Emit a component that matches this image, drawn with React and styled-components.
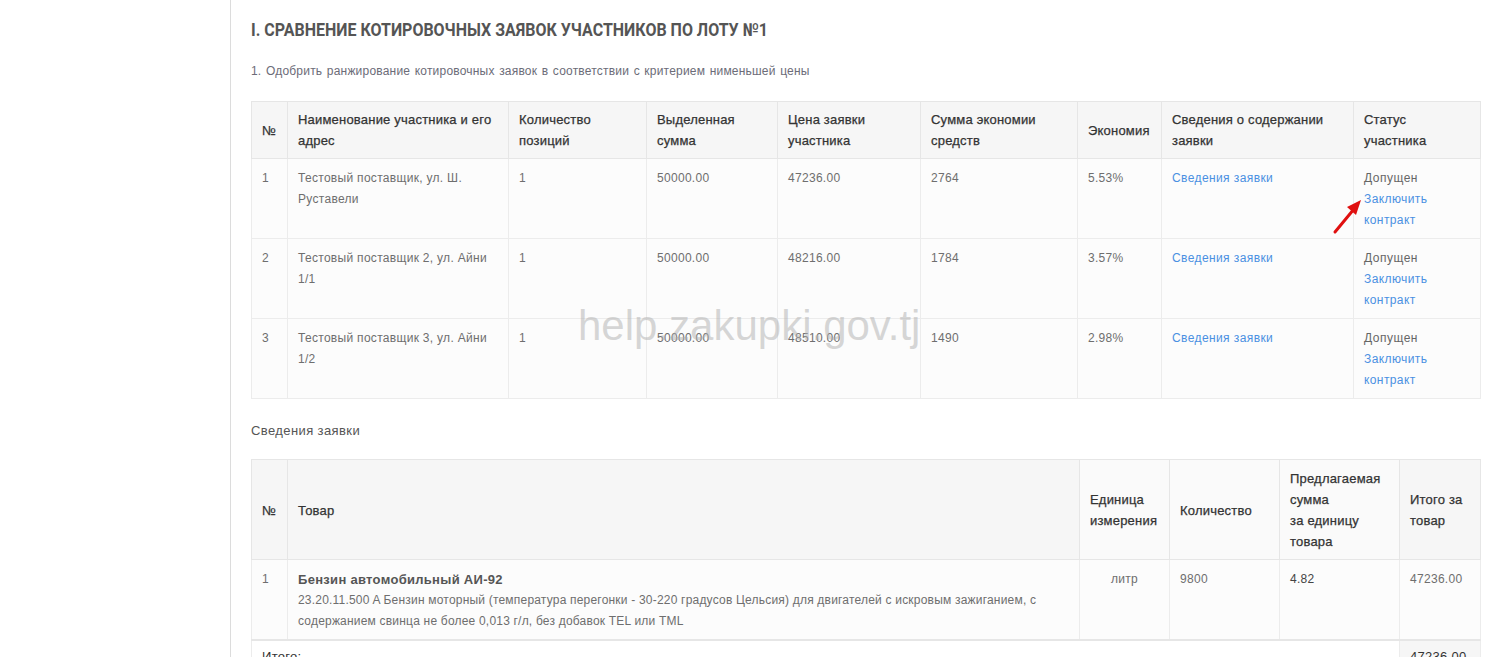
import React from "react";
import styled, { createGlobalStyle } from "styled-components";

const Global = createGlobalStyle`
  html, body { margin: 0; padding: 0; background: #fff; }
  body { font-family: "Liberation Sans", Arial, sans-serif; color: #666; }
  * { box-sizing: border-box; }
`;

const Page = styled.div`
  display: flex;
  height: 657px;
  overflow: hidden;
`;

const Sidebar = styled.aside`
  width: 231px;
  flex: none;
  border-right: 1px solid #dcdcdc;
`;

const Main = styled.main`
  position: relative;
  flex: 1;
  padding: 19px 20px 0 20px;
`;

const Title = styled.h1`
  margin: 0;
  display: inline-block;
  font-family: "Roboto", sans-serif;
  font-weight: 700;
  font-size: 18px;
  line-height: 22px;
  color: #555;
  text-transform: uppercase;
  white-space: nowrap;
  transform: scaleX(0.888);
  transform-origin: left center;
`;

const Lead = styled.p`
  margin: 20px 0 0 0;
  font-size: 12px;
  line-height: 20px;
  color: #6c6c78;
  letter-spacing: 0.2px;
  word-spacing: 1px;
`;

const Table = styled.table`
  width: 1229px;
  border-collapse: collapse;
  table-layout: fixed;
  margin-top: ${(p) => p.$top || 0}px;
`;

const Th = styled.th`
  background: ${(p) => p.$bg || "#f6f6f6"};
  border: 1px solid #e6e6e6;
  padding: ${(p) => (p.$tight ? "7px 10px 7px 10px" : "8px 10px 7px 10px")};
  font-size: 13px;
  line-height: 21px;
  font-weight: 400;
  color: #333;
  text-align: left;
  vertical-align: middle;
  letter-spacing: 0.2px;
  -webkit-text-stroke: 0.25px #333;
`;

const Td = styled.td`
  background: ${(p) => p.$bg || "#fcfcfc"};
  border: 1px solid #ececec;
  padding: 9px 10px 7px 10px;
  font-size: 12px;
  line-height: 21px;
  color: ${(p) => p.$color || "#6e6e6e"};
  text-align: ${(p) => (p.$center ? "center" : "left")};
  vertical-align: top;
  letter-spacing: 0.3px;
  height: ${(p) => (p.$h ? p.$h + "px" : "auto")};
`;

const FootTd = styled(Td)`
  border-top: 2px solid #e6e6e6;
  padding-top: 5px;
  font-size: 13px;
  color: #333;
`;

const Link = styled.a`
  color: #4a90e2;
  text-decoration: none;
  display: ${(p) => (p.$block ? "block" : "inline")};
  letter-spacing: 0.4px;
`;

const Status = styled.span`
  display: block;
  color: #666;
  letter-spacing: 0.5px;
`;

const StatusCell = styled(Td)`
  position: relative;
`;

const ArrowWrap = styled.span`
  position: absolute;
  left: -22px;
  top: 36px;
  width: 30px;
  height: 40px;
`;

const Section = styled.div`
  margin-top: 23px;
  font-size: 13px;
  line-height: 18px;
  color: #555;
  letter-spacing: 0.4px;
`;

const ProductName = styled.div`
  font-size: 13px;
  color: #555;
  font-weight: 700;
  letter-spacing: 0.3px;
`;

const ProductDesc = styled.div`
  color: #6e6e6e;
  letter-spacing: 0.2px;
`;

const Watermark = styled.div`
  position: absolute;
  left: 347px;
  top: 300px;
  font-family: "Liberation Sans", Arial, sans-serif;
  font-size: 42px;
  line-height: 52px;
  color: rgba(175, 175, 175, 0.5);
  pointer-events: none;
`;

const Arrow = () => (
  <svg width="30" height="40" viewBox="0 0 30 40">
    <line x1="3" y1="37" x2="22" y2="14" stroke="#e01010" strokeWidth="3" strokeLinecap="round" />
    <polygon points="29,5 15,12 24,20" fill="#e01010" />
  </svg>
);

const rows = [
  { n: 1, name: "Тестовый поставщик, ул. Ш. Руставели", q: "1", s: "50000.00", p: "47236.00", e: "2764", pct: "5.53%", arrow: true },
  { n: 2, name: "Тестовый поставщик 2, ул. Айни 1/1", q: "1", s: "50000.00", p: "48216.00", e: "1784", pct: "3.57%" },
  { n: 3, name: "Тестовый поставщик 3, ул. Айни 1/2", q: "1", s: "50000.00", p: "48510.00", e: "1490", pct: "2.98%" },
];

const heads1 = [
  "№",
  "Наименование участника и его адрес",
  "Количество позиций",
  "Выделенная сумма",
  "Цена заявки участника",
  "Сумма экономии средств",
  "Экономия",
  "Сведения о содержании заявки",
  "Статус участника",
];

export default function App() {
  return (
    <>
      <Global />
      <Page>
        <Sidebar />
        <Main>
          <Title>I. Сравнение котировочных заявок участников по лоту №1</Title>
          <Lead>1. Одобрить ранжирование котировочных заявок в соответствии с критерием нименьшей цены</Lead>
          <Table $top={20}>
            <colgroup>
              <col style={{ width: 36 }} />
              <col style={{ width: 221 }} />
              <col style={{ width: 138 }} />
              <col style={{ width: 131 }} />
              <col style={{ width: 143 }} />
              <col style={{ width: 157 }} />
              <col style={{ width: 84 }} />
              <col style={{ width: 192 }} />
              <col style={{ width: 127 }} />
            </colgroup>
            <thead>
              <tr>
                {heads1.map((h) => (
                  <Th key={h} $tight>{h}</Th>
                ))}
              </tr>
            </thead>
            <tbody>
              {rows.map((r) => (
                <tr key={r.n}>
                  <Td $h={80}>{r.n}</Td>
                  <Td>{r.name}</Td>
                  <Td>{r.q}</Td>
                  <Td>{r.s}</Td>
                  <Td>{r.p}</Td>
                  <Td>{r.e}</Td>
                  <Td>{r.pct}</Td>
                  <Td>
                    <Link href="#">Сведения заявки</Link>
                  </Td>
                  <StatusCell>
                    <Status>Допущен</Status>
                    <Link href="#" $block>Заключить контракт</Link>
                    {r.arrow && (
                      <ArrowWrap>
                        <Arrow />
                      </ArrowWrap>
                    )}
                  </StatusCell>
                </tr>
              ))}
            </tbody>
          </Table>

          <Section>Сведения заявки</Section>

          <Table $top={19}>
            <colgroup>
              <col style={{ width: 36 }} />
              <col style={{ width: 792 }} />
              <col style={{ width: 90 }} />
              <col style={{ width: 110 }} />
              <col style={{ width: 120 }} />
              <col style={{ width: 81 }} />
            </colgroup>
            <thead>
              <tr>
                <Th>№</Th>
                <Th>Товар</Th>
                <Th $bg="#fafafa">Единица измерения</Th>
                <Th $bg="#fafafa">Количество</Th>
                <Th $bg="#fafafa">
                  Предлагаемая сумма
                  <br />
                  за единицу товара
                </Th>
                <Th>Итого за товар</Th>
              </tr>
            </thead>
            <tbody>
              <tr>
                <Td $h={80}>1</Td>
                <Td>
                  <ProductName>Бензин автомобильный АИ-92</ProductName>
                  <ProductDesc>
                    23.20.11.500 A Бензин моторный (температура перегонки - 30-220 градусов Цельсия) для двигателей с искровым зажиганием, с содержанием свинца не более 0,013 г/л, без добавок TEL или TML
                  </ProductDesc>
                </Td>
                <Td $center>литр</Td>
                <Td>9800</Td>
                <Td $color="#444">4.82</Td>
                <Td>47236.00</Td>
              </tr>
              <tr>
                <FootTd colSpan={5} $bg="#fff">Итого:</FootTd>
                <FootTd $bg="#f6f6f6">47236.00</FootTd>
              </tr>
            </tbody>
          </Table>
          <Watermark>help.zakupki.gov.tj</Watermark>
        </Main>
      </Page>
    </>
  );
}
